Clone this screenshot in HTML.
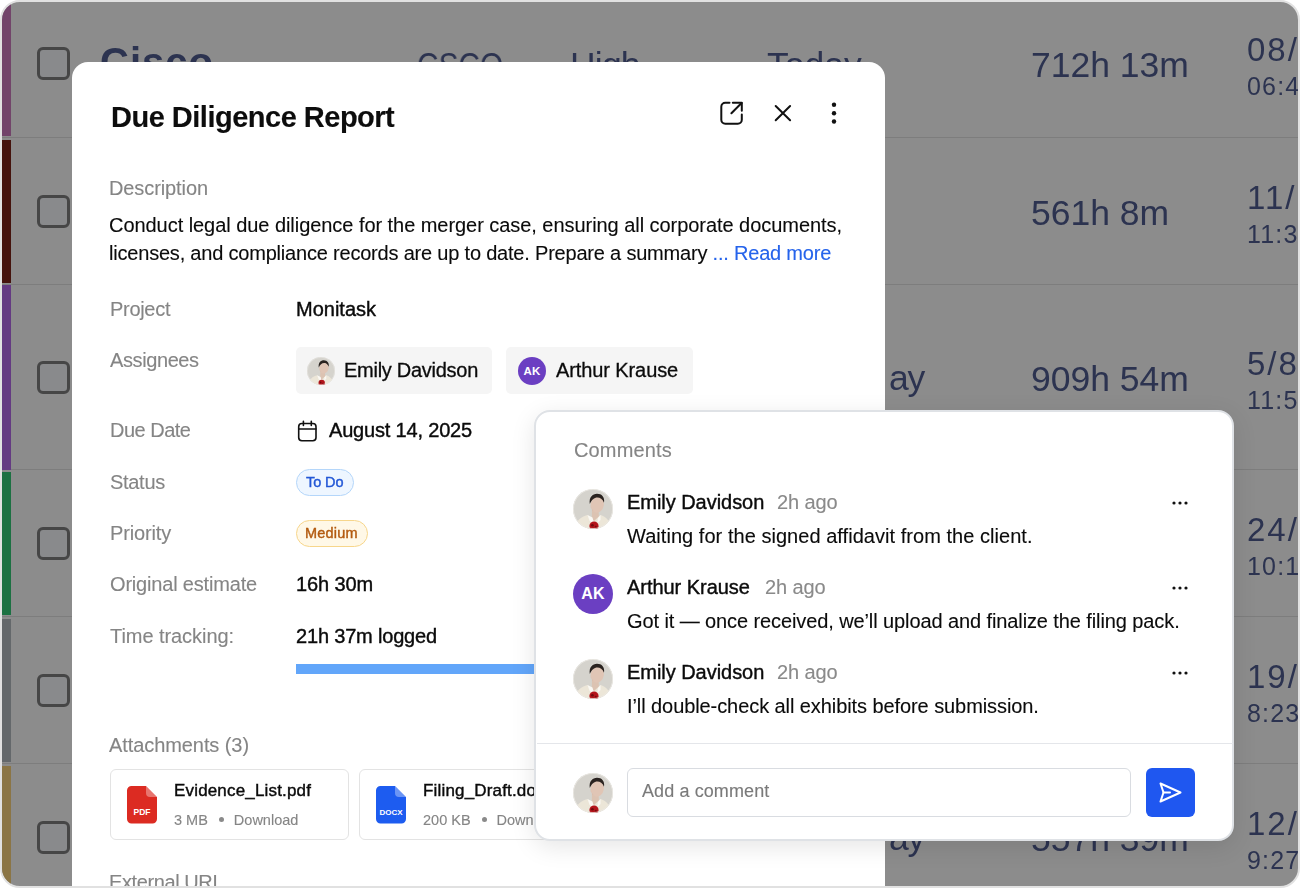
<!DOCTYPE html>
<html><head><meta charset="utf-8"><style>
html,body{margin:0;padding:0;background:#fff;width:1300px;height:888px;overflow:hidden;}
*{box-sizing:border-box;}
body{font-family:"Liberation Sans",sans-serif;}
.t{position:absolute;white-space:nowrap;will-change:transform;-webkit-text-stroke:0.12px currentColor;}
.r{position:absolute;}
.t.med{-webkit-text-stroke:0.4px currentColor;}
.frame{position:absolute;left:0;top:0;width:1300px;height:888px;border:2px solid #e1e1e1;border-radius:20px;overflow:hidden;background:#8c8c8c;}
.inner{position:absolute;left:-2px;top:-2px;width:1300px;height:888px;}
</style></head><body>
<div class="frame"><div class="inner">
<div class="r" style="left:0px;top:137px;width:1300px;height:1px;background:#7d7d7d;"></div>
<div class="r" style="left:0px;top:284px;width:1300px;height:1px;background:#7d7d7d;"></div>
<div class="r" style="left:0px;top:469px;width:1300px;height:1px;background:#7d7d7d;"></div>
<div class="r" style="left:0px;top:616px;width:1300px;height:1px;background:#7d7d7d;"></div>
<div class="r" style="left:0px;top:763px;width:1300px;height:1px;background:#7d7d7d;"></div>
<div class="r" style="left:2px;top:2px;width:9px;height:134px;background:#72446a;"></div>
<div class="r" style="left:2px;top:140px;width:9px;height:143px;background:#45130d;"></div>
<div class="r" style="left:2px;top:285px;width:9px;height:185px;background:#643a82;"></div>
<div class="r" style="left:2px;top:472px;width:9px;height:143px;background:#1c7142;"></div>
<div class="r" style="left:2px;top:619px;width:9px;height:143px;background:#64686b;"></div>
<div class="r" style="left:2px;top:766px;width:9px;height:122px;background:#8b7545;"></div>
<div class="r" style="left:37px;top:47.0px;width:33px;height:33px;border:3px solid #464646;border-radius:6px;background:#898a8c;"></div>
<div class="r" style="left:37px;top:194.9px;width:33px;height:33px;border:3px solid #464646;border-radius:6px;background:#898a8c;"></div>
<div class="r" style="left:37px;top:361.0px;width:33px;height:33px;border:3px solid #464646;border-radius:6px;background:#898a8c;"></div>
<div class="r" style="left:37px;top:527.0px;width:33px;height:33px;border:3px solid #464646;border-radius:6px;background:#898a8c;"></div>
<div class="r" style="left:37px;top:674.0px;width:33px;height:33px;border:3px solid #464646;border-radius:6px;background:#898a8c;"></div>
<div class="r" style="left:37px;top:821.0px;width:33px;height:33px;border:3px solid #464646;border-radius:6px;background:#898a8c;"></div>
<div class="t" style="left:99.8px;top:42.13px;font-size:40px;line-height:40px;color:#2c3350;font-weight:700;letter-spacing:1.0px;-webkit-text-stroke:0;">Cisco</div>
<div class="t" style="left:417.3px;top:47.64px;font-size:35.5px;line-height:35.5px;color:#2c3350;transform:scaleX(0.84);transform-origin:0 0;-webkit-text-stroke:0;">CSCO</div>
<div class="t" style="left:570.3px;top:47.64px;font-size:35.5px;line-height:35.5px;color:#2c3350;letter-spacing:-0.8px;-webkit-text-stroke:0;">High</div>
<div class="t" style="left:766.5px;top:47.64px;font-size:35.5px;line-height:35.5px;color:#2c3350;-webkit-text-stroke:0;">Today</div>
<div class="t" style="left:1031.3px;top:47.64px;font-size:35.5px;line-height:35.5px;color:#2c3350;-webkit-text-stroke:0;">712h 13m</div>
<div class="t" style="left:1247.3px;top:33.06px;font-size:33px;line-height:33px;color:#2c3350;letter-spacing:2px;-webkit-text-stroke:0;">08/</div>
<div class="t" style="left:1246.8px;top:73.83px;font-size:25px;line-height:25px;color:#2c3350;letter-spacing:1.2px;-webkit-text-stroke:0;">06:4</div>
<div class="t" style="left:1031.3px;top:195.54px;font-size:35.5px;line-height:35.5px;color:#2c3350;-webkit-text-stroke:0;">561h 8m</div>
<div class="t" style="left:1247.3px;top:180.96px;font-size:33px;line-height:33px;color:#2c3350;letter-spacing:2px;-webkit-text-stroke:0;">11/</div>
<div class="t" style="left:1246.8px;top:221.73px;font-size:25px;line-height:25px;color:#2c3350;letter-spacing:1.2px;-webkit-text-stroke:0;">11:3</div>
<div class="t" style="left:1031.3px;top:361.64px;font-size:35.5px;line-height:35.5px;color:#2c3350;-webkit-text-stroke:0;">909h 54m</div>
<div class="t" style="left:1247.3px;top:347.06px;font-size:33px;line-height:33px;color:#2c3350;letter-spacing:2px;-webkit-text-stroke:0;">5/8</div>
<div class="t" style="left:1246.8px;top:387.83px;font-size:25px;line-height:25px;color:#2c3350;letter-spacing:1.2px;-webkit-text-stroke:0;">11:5</div>
<div class="t" style="left:1031.3px;top:527.64px;font-size:35.5px;line-height:35.5px;color:#2c3350;-webkit-text-stroke:0;">433h 12m</div>
<div class="t" style="left:1247.3px;top:513.06px;font-size:33px;line-height:33px;color:#2c3350;letter-spacing:2px;-webkit-text-stroke:0;">24/</div>
<div class="t" style="left:1246.8px;top:553.83px;font-size:25px;line-height:25px;color:#2c3350;letter-spacing:1.2px;-webkit-text-stroke:0;">10:1</div>
<div class="t" style="left:1031.3px;top:674.64px;font-size:35.5px;line-height:35.5px;color:#2c3350;-webkit-text-stroke:0;">804h 2m</div>
<div class="t" style="left:1247.3px;top:660.06px;font-size:33px;line-height:33px;color:#2c3350;letter-spacing:2px;-webkit-text-stroke:0;">19/</div>
<div class="t" style="left:1246.8px;top:700.83px;font-size:25px;line-height:25px;color:#2c3350;letter-spacing:1.2px;-webkit-text-stroke:0;">8:23</div>
<div class="t" style="left:1031.3px;top:821.64px;font-size:35.5px;line-height:35.5px;color:#2c3350;-webkit-text-stroke:0;">557h 39m</div>
<div class="t" style="left:1247.3px;top:807.06px;font-size:33px;line-height:33px;color:#2c3350;letter-spacing:2px;-webkit-text-stroke:0;">12/</div>
<div class="t" style="left:1246.8px;top:847.83px;font-size:25px;line-height:25px;color:#2c3350;letter-spacing:1.2px;-webkit-text-stroke:0;">9:27</div>
<div class="t" style="left:889.3px;top:361.44px;font-size:35.5px;line-height:35.5px;color:#2c3350;letter-spacing:-1.2px;-webkit-text-stroke:0;">ay</div>
<div class="t" style="left:889.3px;top:821.44px;font-size:35.5px;line-height:35.5px;color:#2c3350;letter-spacing:-1.2px;-webkit-text-stroke:0;">ay</div>
<div class="r" style="left:72px;top:62px;width:813px;height:900px;background:#fff;border-radius:16px;"></div>
<div class="t" style="left:110.6px;top:102.75px;font-size:29px;line-height:29px;color:#0d0d0d;font-weight:700;letter-spacing:-0.5px;">Due Diligence Report</div>
<svg class="r" style="left:716px;top:98px;" width="32" height="32" viewBox="0 0 32 32" fill="none" stroke="#111" stroke-width="2" stroke-linecap="round" stroke-linejoin="round">
<path d="M13.5 4.85H9.3A4 4 0 0 0 5.3 8.85V21.8A4 4 0 0 0 9.3 25.8H21.8A4 4 0 0 0 25.8 21.8V16.5"/><path d="M16.8 4.85H25.8V12.85"/><path d="M25.6 5L15.4 15.3"/></svg>
<svg class="r" style="left:767px;top:97px;" width="32" height="32" viewBox="0 0 32 32" fill="none" stroke="#111" stroke-width="2" stroke-linecap="round"><path d="M8.7 9L23.1 23.2M23.1 9L8.7 23.2"/></svg>
<svg class="r" style="left:818px;top:97px;" width="32" height="32" viewBox="0 0 32 32" fill="#111"><circle cx="16" cy="7.7" r="2.2"/><circle cx="16" cy="16.3" r="2.2"/><circle cx="16" cy="24.55" r="2.2"/></svg>
<div class="t" style="left:109.3px;top:177.67px;font-size:20px;line-height:20px;color:#858585;letter-spacing:-0.1px;">Description</div>
<div class="t" style="left:109.3px;top:214.57px;font-size:20px;line-height:20px;color:#0b0b0b;letter-spacing:-0.05px;">Conduct legal due diligence for the merger case, ensuring all corporate documents,</div>
<div class="t" style="left:109.3px;top:243.07px;font-size:20px;line-height:20px;color:#0b0b0b;letter-spacing:-0.2px;">licenses, and compliance records are up to date. Prepare a summary <span style="color:#2563eb">... Read more</span></div>
<div class="t" style="left:109.7px;top:299.07px;font-size:20px;line-height:20px;color:#858585;letter-spacing:-0.3px;">Project</div>
<div class="t" style="left:109.7px;top:350.07px;font-size:20px;line-height:20px;color:#858585;letter-spacing:-0.4px;">Assignees</div>
<div class="t" style="left:109.7px;top:420.07px;font-size:20px;line-height:20px;color:#858585;letter-spacing:-0.5px;">Due Date</div>
<div class="t" style="left:109.7px;top:472.07px;font-size:20px;line-height:20px;color:#858585;letter-spacing:-0.3px;">Status</div>
<div class="t" style="left:109.7px;top:523.07px;font-size:20px;line-height:20px;color:#858585;letter-spacing:-0.15px;">Priority</div>
<div class="t" style="left:109.7px;top:574.07px;font-size:20px;line-height:20px;color:#858585;letter-spacing:-0.18px;">Original estimate</div>
<div class="t" style="left:109.7px;top:626.07px;font-size:20px;line-height:20px;color:#858585;letter-spacing:-0.06px;">Time tracking:</div>
<div class="t med" style="left:295.9px;top:299.07px;font-size:20px;line-height:20px;color:#0b0b0b;">Monitask</div>
<div class="r" style="left:296px;top:347px;width:196px;height:46.5px;background:#f5f5f5;border-radius:5px;"></div>
<div class="r" style="left:506px;top:347px;width:187px;height:46.5px;background:#f5f5f5;border-radius:5px;"></div>
<svg class="r" style="left:307px;top:356.5px;" width="28" height="28" viewBox="0 0 40 40"><defs><clipPath id="c1"><circle cx="20" cy="20" r="20"/></clipPath></defs><g clip-path="url(#c1)"><rect width="40" height="40" fill="#d5d3cd"/><path d="M19 19L18.8 29L21.5 33L26 28.5L25.5 21Z" fill="#dcc3b2"/><path d="M1 40C3 32 8 27.5 14.5 26L21 32L27.5 26C33 27.5 37 32 39 40Z" fill="#ece6d8"/><path d="M14.5 26L19.5 28.5L21.5 36.5L16.5 31.5Z" fill="#faf8f3"/><path d="M27.5 26L25 29L24 35L27.5 31Z" fill="#faf8f3"/><ellipse cx="24.3" cy="15.3" rx="6.6" ry="8.4" fill="#e0c5b5" transform="rotate(10 24.3 15.3)"/><path d="M18 14C17 18 19 21 20.5 22C18 20 17 17 18 14Z" fill="#c9a898"/><path d="M16.8 15C15.8 8.5 19.5 4.8 24 4.8C28.8 4.8 32 8.2 31 13.8C29.5 10 27 8.6 24.5 8.6C21 8.6 18.8 11 16.8 15Z" fill="#2a2320"/><circle cx="21" cy="37" r="4.6" fill="#b3141b"/><circle cx="19.4" cy="36.2" r="1.3" fill="#6f0a0e"/><circle cx="22.8" cy="37.8" r="1" fill="#7a0a0f"/></g><circle cx="20" cy="20" r="19.6" fill="none" stroke="#eceae5" stroke-width="0.8"/></svg>
<div class="r" style="left:518px;top:356.5px;width:28px;height:28px;border-radius:50%;background:#6b3fc2;color:#fff;font-size:11.5px;font-weight:700;line-height:28px;text-align:center;letter-spacing:0.3px;">AK</div>
<div class="t" style="left:344.3px;top:359.57px;font-size:20px;line-height:20px;color:#0b0b0b;letter-spacing:-0.27px;-webkit-text-stroke:0.3px currentColor;">Emily Davidson</div>
<div class="t" style="left:555.5px;top:359.57px;font-size:20px;line-height:20px;color:#0b0b0b;letter-spacing:-0.1px;-webkit-text-stroke:0.3px currentColor;">Arthur Krause</div>
<svg class="r" style="left:296px;top:419px;" width="23" height="24" viewBox="0 0 23 24" fill="none" stroke="#111" stroke-width="1.6" stroke-linecap="round" stroke-linejoin="round"><rect x="2.7" y="4.5" width="17.3" height="17.2" rx="3.2"/><path d="M2.7 10H20M7.4 2.2V6.4M15.3 2.2V6.4"/></svg>
<div class="t med" style="left:328.9px;top:420.07px;font-size:20px;line-height:20px;color:#0b0b0b;letter-spacing:-0.18px;">August 14, 2025</div>
<div class="r" style="left:296px;top:469px;width:58px;height:27px;background:#eef6ff;border:1px solid #b4d6fa;border-radius:14px;"></div>
<div class="t med" style="left:306.3px;top:475.42px;font-size:14.5px;line-height:14.5px;color:#2257d6;letter-spacing:-0.1px;">To Do</div>
<div class="r" style="left:296px;top:520px;width:72px;height:26.5px;background:#fff8e7;border:1px solid #f7d68b;border-radius:14px;"></div>
<div class="t med" style="left:304.7px;top:526.32px;font-size:14.5px;line-height:14.5px;color:#b35a0f;letter-spacing:0.2px;">Medium</div>
<div class="t med" style="left:295.9px;top:574.07px;font-size:20px;line-height:20px;color:#0b0b0b;letter-spacing:-0.12px;">16h 30m</div>
<div class="t med" style="left:295.5px;top:626.07px;font-size:20px;line-height:20px;color:#0b0b0b;letter-spacing:-0.18px;">21h 37m logged</div>
<div class="r" style="left:296px;top:664px;width:552px;height:9.5px;background:#62a6fa;"></div>
<div class="t" style="left:109.3px;top:735.07px;font-size:20px;line-height:20px;color:#858585;letter-spacing:-0.08px;">Attachments (3)</div>
<div class="r" style="left:110px;top:769px;width:239px;height:71px;border:1px solid #e3e3e3;border-radius:6px;background:#fff;"></div>
<svg class="r" style="left:127px;top:786px;" width="30" height="38" viewBox="0 0 30 38"><path d="M4 0H19L30 11V33a4.5 4.5 0 0 1-4.5 4.5H4.5A4.5 4.5 0 0 1 0 33V4.5A4.5 4.5 0 0 1 4.5 0Z" fill="#dc2b22"/><path d="M19 0L30 11H23a4 4 0 0 1-4-4Z" fill="#fff" fill-opacity="0.35"/><text x="15" y="28.5" text-anchor="middle" font-family="Liberation Sans" font-weight="700" font-size="8.5" fill="#fff">PDF</text></svg>
<div class="t med" style="left:174.3px;top:781.61px;font-size:17px;line-height:17px;color:#0b0b0b;letter-spacing:0.17px;">Evidence_List.pdf</div>
<div class="t" style="left:174.3px;top:812.72px;font-size:14.5px;line-height:14.5px;color:#858585;">3 MB<span style="display:inline-block;width:5px;height:5px;border-radius:50%;background:#8a8a8a;margin:0 10px 0 11px;vertical-align:middle;position:relative;top:-2px"></span>Download</div>
<div class="r" style="left:359px;top:769px;width:239px;height:71px;border:1px solid #e3e3e3;border-radius:6px;background:#fff;"></div>
<svg class="r" style="left:376px;top:786px;" width="30" height="38" viewBox="0 0 30 38"><path d="M4 0H19L30 11V33a4.5 4.5 0 0 1-4.5 4.5H4.5A4.5 4.5 0 0 1 0 33V4.5A4.5 4.5 0 0 1 4.5 0Z" fill="#1d5cf0"/><path d="M19 0L30 11H23a4 4 0 0 1-4-4Z" fill="#fff" fill-opacity="0.35"/><text x="15" y="28.5" text-anchor="middle" font-family="Liberation Sans" font-weight="700" font-size="8" fill="#fff">DOCX</text></svg>
<div class="t med" style="left:423.3px;top:781.61px;font-size:17px;line-height:17px;color:#0b0b0b;letter-spacing:0.17px;">Filing_Draft.docx</div>
<div class="t" style="left:423.3px;top:812.72px;font-size:14.5px;line-height:14.5px;color:#858585;">200 KB<span style="display:inline-block;width:5px;height:5px;border-radius:50%;background:#8a8a8a;margin:0 10px 0 11px;vertical-align:middle;position:relative;top:-2px"></span>Download</div>
<div class="t" style="left:109.3px;top:872.07px;font-size:20px;line-height:20px;color:#858585;letter-spacing:-0.4px;">External URL</div>
<div class="r" style="left:534px;top:410px;width:700px;height:430.5px;background:#fff;border:2px solid #dfe2e6;border-radius:16px;box-shadow:0 6px 24px rgba(0,0,0,0.10);"></div>
<div class="t" style="left:573.5px;top:439.57px;font-size:20px;line-height:20px;color:#858585;letter-spacing:0.15px;">Comments</div>
<svg class="r" style="left:573px;top:489px;" width="40" height="40" viewBox="0 0 40 40"><defs><clipPath id="c10"><circle cx="20" cy="20" r="20"/></clipPath></defs><g clip-path="url(#c10)"><rect width="40" height="40" fill="#d5d3cd"/><path d="M19 19L18.8 29L21.5 33L26 28.5L25.5 21Z" fill="#dcc3b2"/><path d="M1 40C3 32 8 27.5 14.5 26L21 32L27.5 26C33 27.5 37 32 39 40Z" fill="#ece6d8"/><path d="M14.5 26L19.5 28.5L21.5 36.5L16.5 31.5Z" fill="#faf8f3"/><path d="M27.5 26L25 29L24 35L27.5 31Z" fill="#faf8f3"/><ellipse cx="24.3" cy="15.3" rx="6.6" ry="8.4" fill="#e0c5b5" transform="rotate(10 24.3 15.3)"/><path d="M18 14C17 18 19 21 20.5 22C18 20 17 17 18 14Z" fill="#c9a898"/><path d="M16.8 15C15.8 8.5 19.5 4.8 24 4.8C28.8 4.8 32 8.2 31 13.8C29.5 10 27 8.6 24.5 8.6C21 8.6 18.8 11 16.8 15Z" fill="#2a2320"/><circle cx="21" cy="37" r="4.6" fill="#b3141b"/><circle cx="19.4" cy="36.2" r="1.3" fill="#6f0a0e"/><circle cx="22.8" cy="37.8" r="1" fill="#7a0a0f"/></g><circle cx="20" cy="20" r="19.6" fill="none" stroke="#eceae5" stroke-width="0.8"/></svg>
<div class="t" style="left:627.0px;top:491.97px;font-size:20px;line-height:20px;color:#0b0b0b;letter-spacing:-0.04px;-webkit-text-stroke:0.4px currentColor;">Emily Davidson</div>
<div class="t" style="left:777.0px;top:491.97px;font-size:20px;line-height:20px;color:#8a8a8a;letter-spacing:-0.1px;">2h ago</div>
<svg class="r" style="left:1170px;top:498px;" width="20" height="10" viewBox="0 0 20 10" fill="#111"><circle cx="4" cy="5" r="1.6"/><circle cx="10" cy="5" r="1.6"/><circle cx="16" cy="5" r="1.6"/></svg>
<div class="t" style="left:627.0px;top:525.67px;font-size:20px;line-height:20px;color:#0b0b0b;letter-spacing:0.04px;">Waiting for the signed affidavit from the client.</div>
<div class="r" style="left:573px;top:574px;width:40px;height:40px;border-radius:50%;background:#6b3fc2;color:#fff;font-size:16px;font-weight:700;line-height:40px;text-align:center;letter-spacing:0.3px;">AK</div>
<div class="t" style="left:627.0px;top:576.97px;font-size:20px;line-height:20px;color:#0b0b0b;letter-spacing:-0.04px;-webkit-text-stroke:0.4px currentColor;">Arthur Krause</div>
<div class="t" style="left:764.8px;top:576.97px;font-size:20px;line-height:20px;color:#8a8a8a;letter-spacing:-0.1px;">2h ago</div>
<svg class="r" style="left:1170px;top:583px;" width="20" height="10" viewBox="0 0 20 10" fill="#111"><circle cx="4" cy="5" r="1.6"/><circle cx="10" cy="5" r="1.6"/><circle cx="16" cy="5" r="1.6"/></svg>
<div class="t" style="left:627.0px;top:610.67px;font-size:20px;line-height:20px;color:#0b0b0b;letter-spacing:-0.1px;">Got it — once received, we’ll upload and finalize the filing pack.</div>
<svg class="r" style="left:573px;top:659px;" width="40" height="40" viewBox="0 0 40 40"><defs><clipPath id="c12"><circle cx="20" cy="20" r="20"/></clipPath></defs><g clip-path="url(#c12)"><rect width="40" height="40" fill="#d5d3cd"/><path d="M19 19L18.8 29L21.5 33L26 28.5L25.5 21Z" fill="#dcc3b2"/><path d="M1 40C3 32 8 27.5 14.5 26L21 32L27.5 26C33 27.5 37 32 39 40Z" fill="#ece6d8"/><path d="M14.5 26L19.5 28.5L21.5 36.5L16.5 31.5Z" fill="#faf8f3"/><path d="M27.5 26L25 29L24 35L27.5 31Z" fill="#faf8f3"/><ellipse cx="24.3" cy="15.3" rx="6.6" ry="8.4" fill="#e0c5b5" transform="rotate(10 24.3 15.3)"/><path d="M18 14C17 18 19 21 20.5 22C18 20 17 17 18 14Z" fill="#c9a898"/><path d="M16.8 15C15.8 8.5 19.5 4.8 24 4.8C28.8 4.8 32 8.2 31 13.8C29.5 10 27 8.6 24.5 8.6C21 8.6 18.8 11 16.8 15Z" fill="#2a2320"/><circle cx="21" cy="37" r="4.6" fill="#b3141b"/><circle cx="19.4" cy="36.2" r="1.3" fill="#6f0a0e"/><circle cx="22.8" cy="37.8" r="1" fill="#7a0a0f"/></g><circle cx="20" cy="20" r="19.6" fill="none" stroke="#eceae5" stroke-width="0.8"/></svg>
<div class="t" style="left:627.0px;top:661.97px;font-size:20px;line-height:20px;color:#0b0b0b;letter-spacing:-0.04px;-webkit-text-stroke:0.4px currentColor;">Emily Davidson</div>
<div class="t" style="left:777.0px;top:661.97px;font-size:20px;line-height:20px;color:#8a8a8a;letter-spacing:-0.1px;">2h ago</div>
<svg class="r" style="left:1170px;top:668px;" width="20" height="10" viewBox="0 0 20 10" fill="#111"><circle cx="4" cy="5" r="1.6"/><circle cx="10" cy="5" r="1.6"/><circle cx="16" cy="5" r="1.6"/></svg>
<div class="t" style="left:627.0px;top:695.67px;font-size:20px;line-height:20px;color:#0b0b0b;letter-spacing:-0.08px;">I’ll double-check all exhibits before submission.</div>
<div class="r" style="left:537px;top:743px;width:696px;height:1.2px;background:#e4e6ea;"></div>
<svg class="r" style="left:573px;top:772.5px;" width="40" height="40" viewBox="0 0 40 40"><defs><clipPath id="c20"><circle cx="20" cy="20" r="20"/></clipPath></defs><g clip-path="url(#c20)"><rect width="40" height="40" fill="#d5d3cd"/><path d="M19 19L18.8 29L21.5 33L26 28.5L25.5 21Z" fill="#dcc3b2"/><path d="M1 40C3 32 8 27.5 14.5 26L21 32L27.5 26C33 27.5 37 32 39 40Z" fill="#ece6d8"/><path d="M14.5 26L19.5 28.5L21.5 36.5L16.5 31.5Z" fill="#faf8f3"/><path d="M27.5 26L25 29L24 35L27.5 31Z" fill="#faf8f3"/><ellipse cx="24.3" cy="15.3" rx="6.6" ry="8.4" fill="#e0c5b5" transform="rotate(10 24.3 15.3)"/><path d="M18 14C17 18 19 21 20.5 22C18 20 17 17 18 14Z" fill="#c9a898"/><path d="M16.8 15C15.8 8.5 19.5 4.8 24 4.8C28.8 4.8 32 8.2 31 13.8C29.5 10 27 8.6 24.5 8.6C21 8.6 18.8 11 16.8 15Z" fill="#2a2320"/><circle cx="21" cy="37" r="4.6" fill="#b3141b"/><circle cx="19.4" cy="36.2" r="1.3" fill="#6f0a0e"/><circle cx="22.8" cy="37.8" r="1" fill="#7a0a0f"/></g><circle cx="20" cy="20" r="19.6" fill="none" stroke="#eceae5" stroke-width="0.8"/></svg>
<div class="r" style="left:627px;top:768px;width:504px;height:49px;border:1.2px solid #d9dce1;border-radius:6px;background:#fff;"></div>
<div class="t" style="left:641.7px;top:782.36px;font-size:18px;line-height:18px;color:#7a7a7a;letter-spacing:0.1px;">Add a comment</div>
<div class="r" style="left:1146px;top:768px;width:49px;height:49px;background:#1f57f0;border-radius:6px;"></div>
<svg class="r" style="left:1146px;top:768px;" width="49" height="49" viewBox="0 0 49 49" fill="none" stroke="#fff" stroke-width="2" stroke-linejoin="round" stroke-linecap="round"><path d="M14.5 15.5L34.5 24.5L14.5 33.5L17.5 24.5Z"/><path d="M17.5 24.5H24"/></svg>
</div></div>
</body></html>
